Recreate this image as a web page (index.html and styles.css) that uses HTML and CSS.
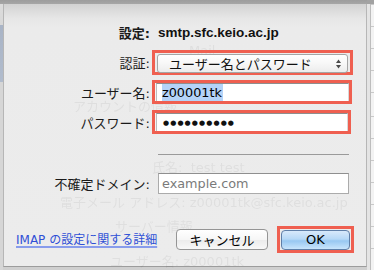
FILE: index.html
```html
<!DOCTYPE html>
<html lang="ja">
<head>
    <meta charset="UTF-8">
    <title>設定</title>
    <link rel="stylesheet" href="styles.css">
</head>
<body>
    <div class="desk">
        <div class="backLeft"></div>
        <div class="sheet">
            <div class="ghosts">
                <span class="ghost g1">Mail</span>
                <span class="ghost g2">アカウントの情報</span>
                <span class="ghost g3">氏名:&nbsp; test test</span>
                <span class="ghost g4">電子メール アドレス: z00001tk@sfc.keio.ac.jp</span>
                <span class="ghost g5">サーバー情報</span>
                <span class="ghost g6">ユーザー名: z00001tk</span>
            </div>
            <div class="form">
                <div class="row rowTitle">
                    <span class="label bold">設定:</span>
                    <span class="host">smtp.sfc.keio.ac.jp</span>
                </div>
                <div class="row rowAuth">
                    <span class="label">認証:</span>
                    <div class="mark markSelect">
                        <div class="popup">
                            <span>ユーザー名とパスワード</span>
                            <svg class="arrows" width="7" height="12" viewBox="0 0 7 12">
                                <path d="M3.5 1.5 L6 5 L1 5 Z" fill="#4a4a4a"/>
                                <path d="M3.5 10.5 L6 7 L1 7 Z" fill="#4a4a4a"/>
                            </svg>
                        </div>
                    </div>
                </div>
                <div class="row rowUser">
                    <span class="label">ユーザー名:</span>
                    <div class="mark markField">
                        <div class="field"><span class="picked">z00001tk</span></div>
                    </div>
                </div>
                <div class="row rowPass">
                    <span class="label">パスワード:</span>
                    <div class="mark markField markPass">
                        <div class="field"><span class="dots">●●●●●●●●●●</span></div>
                    </div>
                </div>
                <div class="row rowSep">
                    <span class="label"></span>
                    <div class="sep"></div>
                </div>
                <div class="row rowDomain">
                    <span class="label">不確定ドメイン:</span>
                    <div class="field plain"><span class="hint">example.com</span></div>
                </div>
            </div>
            <div class="footer">
                <a class="more" href="#">IMAP の設定に関する詳細</a>
                <button class="btn cancel">キャンセル</button>
                <div class="mark markOk">
                    <button class="btn ok">OK</button>
                </div>
            </div>
        </div>
        <div class="backRight"></div>
    </div>
</body>
</html>
```

FILE: styles.css
```css
* {
    box-sizing: border-box;
    font-family: 'DejaVu Sans', 'Noto Sans CJK JP', sans-serif;
}
body {
    margin: 0;
    background-color: #a3a3a3;
}
.desk {
    width: 374px;
    height: 270px;
    display: flex;
    background: linear-gradient(#9d9d9d 0, #a6a6a6 4px, #cfcfcf 4px, #cfcfcf 100%);
    overflow: hidden;
}
.backLeft {
    width: 3px;
    background: linear-gradient(#9d9d9d 0, #a6a6a6 4px, #dcdcdc 4px, #d8d8d8 25px, #a9b4c6 25px, #b1bccd 82px, #d6d6d6 82px);
}
.backRight {
    width: 7px;
    background:
        linear-gradient(to right, #e4e4e4 0, #e4e4e4 3px, #bdbdbd 3px, #bdbdbd 4px, transparent 4px),
        repeating-linear-gradient(#f3f3f3 0, #f3f3f3 21px, #c9c9c9 21px, #c9c9c9 22px);
    background-position: 0 0, 0 91px;
    background-repeat: no-repeat, repeat;
    border-top: 4px solid #a2a2a2;
}
.sheet {
    position: relative;
    width: 364px;
    height: 263px;
    margin-top: 4px;
    border-left: 1px solid #b6b6b6;
    border-right: 1px solid #b6b6b6;
    border-bottom: 1px solid #9c9c9c;
    background: linear-gradient(#d2d2d2 0, #e6e6e6 14px, #ebebeb 24px, #ececec 100%);
}

/* the window behind shows through the sheet */
.ghosts span {
    position: absolute;
    font-size: 13px;
    line-height: 13px;
    color: rgba(0, 0, 0, 0.055);
    white-space: nowrap;
    filter: blur(0.4px);
}
.g1 { left: 185px; top: 40px; font-size: 11px; }
.g2 { left: 69px; top: 96px; }
.g3 { left: 148px; top: 157px; }
.g4 { left: 56px; top: 192px; }
.g5 { left: 111px; top: 216px; }
.g6 { left: 106px; top: 251px; }

.form {
    position: relative;
    padding-top: 20px;
}
.row {
    display: flex;
    align-items: center;
}
.label {
    width: 148px;
    padding-right: 2px;
    text-align: right;
    font-size: 13px;
    color: #1a1a1a;
    white-space: nowrap;
}
.bold {
    font-weight: bold;
}
.rowTitle {
    height: 16px;
}
.host {
    padding-left: 6px;
    font-family: 'Liberation Sans', sans-serif;
    font-weight: bold;
    font-size: 13.5px;
    color: #111;
}
.rowAuth {
    margin-top: 10px;
}
.rowUser {
    margin-top: 5px;
}
.rowPass {
    margin-top: 6px;
}
.mark {
    border: 3px solid #ef5f50;
}
.markSelect {
    width: 201px;
    height: 25px;
    padding: 1px 2px 0 2px;
}
.popup {
    height: 19px;
    display: flex;
    align-items: center;
    justify-content: space-between;
    padding: 0 5px 0 11px;
    border: 1px solid #a5a5a5;
    border-radius: 3px;
    background: linear-gradient(#ffffff, #f7f7f7 50%, #ececec);
    font-size: 13px;
    color: #111;
}
.markField {
    width: 200px;
    height: 24px;
    padding: 0 0 0 1px;
    background-color: #f4f4f4;
}
.markPass {
    width: 199px;
}
.field {
    height: 18px;
    display: flex;
    align-items: center;
    padding-left: 5px;
    background-color: #fff;
    border-top: 1px solid #8e8e8e;
    border-left: 1px solid #bdbdbd;
    border-right: 1px solid #d8d8d8;
}
.picked {
    font-size: 12.8px;
    line-height: 17px;
    background-color: #b4d3f8;
    color: #000;
    padding-right: 1px;
}
.dots {
    font-size: 7px;
    letter-spacing: 1.1px;
    color: #111;
    padding-left: 1px;
}
.rowSep {
    margin-top: 20px;
}
.sep {
    margin-left: 6px;
    width: 191px;
    height: 1px;
    background-color: #9a9a9a;
}
.rowDomain {
    margin-top: 18px;
}
.plain {
    margin-left: 6px;
    width: 191px;
    height: 21px;
    border: 1px solid #ababab;
    border-top-color: #8f8f8f;
    padding-left: 3px;
}
.hint {
    font-size: 12.8px;
    color: #7a7a7a;
}
.footer {
    position: relative;
    display: flex;
    align-items: center;
    margin-top: 32px;
    padding: 0 12px 0 12px;
    height: 27px;
}
.more {
    font-size: 12px;
    line-height: 14px;
    color: #2f50d6;
    text-decoration: underline;
    text-decoration-color: #889cec;
    text-decoration-thickness: 2px;
    text-underline-offset: 2px;
    margin-top: 1px;
    margin-right: auto;
}
.btn {
    height: 21px;
    border-radius: 4px;
    font-size: 13px;
    color: #000;
    padding: 0;
}
.cancel {
    width: 92px;
    margin-right: 9px;
    border: 1px solid #959595;
    background: linear-gradient(#ffffff, #f6f6f6 50%, #ebebeb 51%, #f8f8f8);
}
.markOk {
    width: 77px;
    height: 27px;
    padding: 0 1px;
    display: flex;
    align-items: center;
}
.ok {
    width: 70px;
    height: 20px;
    border: 1px solid #5f7fa8;
    background: linear-gradient(#d8e9fa, #b6d8f6 45%, #98c8f1 55%, #c9e5fc);
}
```
